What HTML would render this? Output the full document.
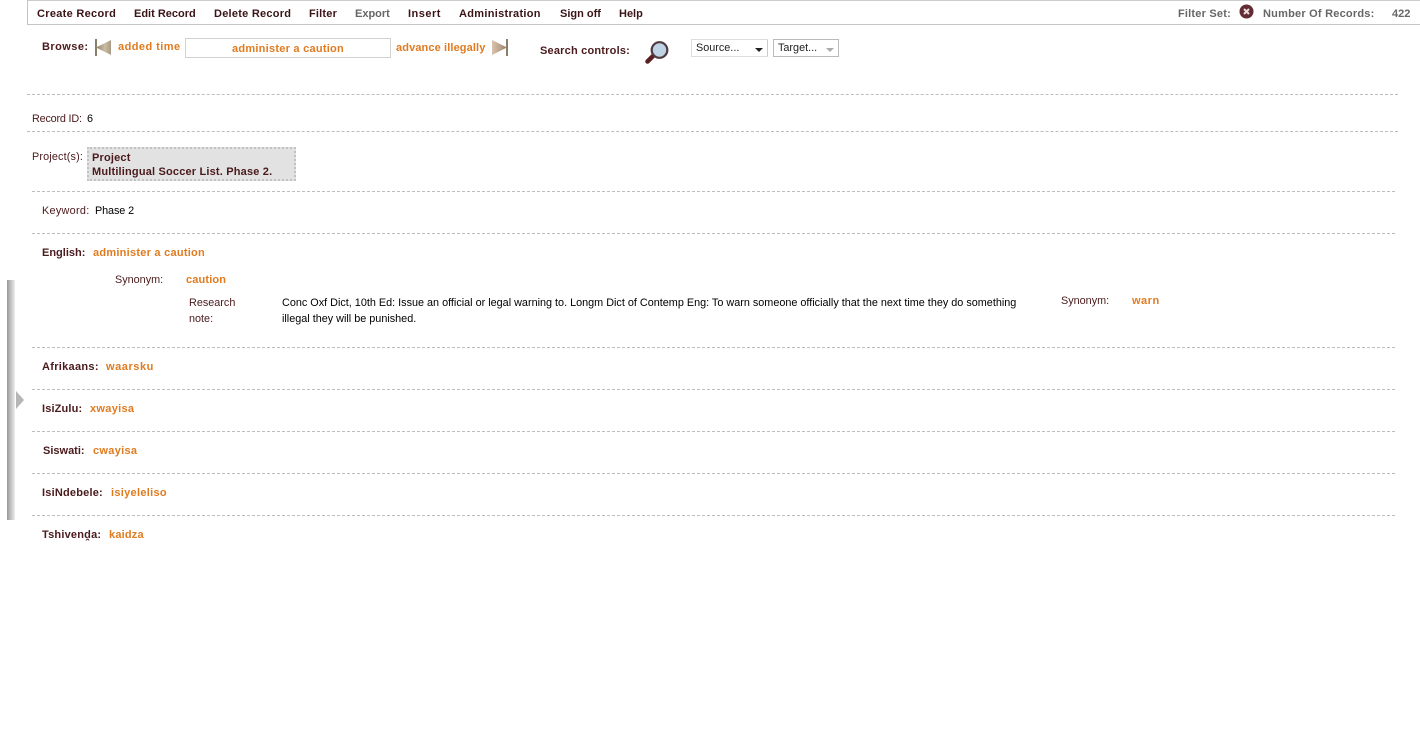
<!DOCTYPE html>
<html><head><meta charset="utf-8"><style>
html,body{margin:0;padding:0;background:#fff;width:1420px;height:752px;overflow:hidden}
body{position:relative;font-family:"Liberation Sans",Arial,sans-serif;font-size:10.83px;color:#4a1a1c}
.t{position:absolute;white-space:nowrap;line-height:14px}
.b{font-weight:bold;font-size:11px;letter-spacing:.2px}
.o{color:#e07b20;font-weight:bold;font-size:11px;letter-spacing:.2px}
.k{color:#000}
.m{color:#3a1416;font-weight:bold;font-size:11px;top:7px;letter-spacing:.1px}
.g{color:#666;font-weight:bold;font-size:11px;top:7px;letter-spacing:.1px}
.d{position:absolute;height:0;border-top:1px dashed #bdbdbd}
</style></head><body>
<div style="position:absolute;left:27px;top:0;width:1393px;height:23px;border:1px solid #c4c4c4;border-right:0;border-top-color:#ccc"></div>
<span class="t m" style="left:37px;letter-spacing:.3px">Create Record</span>
<span class="t m" style="left:134px;letter-spacing:0">Edit Record</span>
<span class="t m" style="left:214px;letter-spacing:.25px">Delete Record</span>
<span class="t m" style="left:309px;letter-spacing:.2px">Filter</span>
<span class="t g" style="left:355px;letter-spacing:0">Export</span>
<span class="t m" style="left:408px;letter-spacing:.5px">Insert</span>
<span class="t m" style="left:459px;letter-spacing:.3px">Administration</span>
<span class="t m" style="left:560px;letter-spacing:0">Sign off</span>
<span class="t m" style="left:619px;letter-spacing:0">Help</span>
<span class="t g" style="left:1178px;letter-spacing:.2px">Filter Set:</span>
<svg style="position:absolute;left:1239px;top:4px" width="15" height="15"><circle cx="7.5" cy="7.5" r="7" fill="#632c33"/><path d="M5 5l5 5M10 5l-5 5" stroke="#e8dcdc" stroke-width="2"/></svg>
<span class="t g" style="left:1263px;letter-spacing:.22px">Number Of Records:</span>
<span class="t g" style="left:1392px;letter-spacing:0">422</span>

<span class="t b" style="left:42px;top:40px;letter-spacing:.45px">Browse:</span>
<svg style="position:absolute;left:94px;top:38px" width="18" height="19"><defs><linearGradient id="a" x1="0" x2="1" y1="0" y2="0"><stop offset="0" stop-color="#8f8267"/><stop offset=".6" stop-color="#c9bda6"/><stop offset="1" stop-color="#a89a80"/></linearGradient><linearGradient id="c" x1="0" x2="1" y1="0" y2="0"><stop offset="0" stop-color="#d9c2ae"/><stop offset=".6" stop-color="#b89f88"/><stop offset="1" stop-color="#8f7c62"/></linearGradient></defs><rect x="1" y="1" width="2" height="17" fill="#8a8068"/><path d="M17 2V17L2 9.5Z" fill="url(#a)"/></svg>
<span class="t o" style="left:118px;top:40px;letter-spacing:.45px">added time</span>
<div style="position:absolute;left:185px;top:38px;width:204px;height:18px;border:1px solid #d2d2d2"></div>
<span class="t o" style="left:232px;top:42px;letter-spacing:.25px">administer a caution</span>
<span class="t o" style="left:396px;top:41px;letter-spacing:.12px">advance illegally</span>
<svg style="position:absolute;left:491px;top:38px" width="18" height="19"><path d="M1 2V17L16 9.5Z" fill="url(#c)"/><rect x="15" y="1" width="2" height="17" fill="#8a8068"/></svg>
<span class="t b" style="left:540px;top:44px;letter-spacing:.2px">Search controls:</span>
<svg style="position:absolute;left:644px;top:40px" width="26" height="26"><path d="M3.5 21.5L10 15" stroke="#5a1f22" stroke-width="4.5" stroke-linecap="round"/><circle cx="15.5" cy="10" r="7.8" fill="#c0d2e6" stroke="#4f3a40" stroke-width="2.2"/></svg>
<div style="position:absolute;left:691px;top:39px;width:75px;height:16px;border:1px solid #ddd;border-right-color:#ccc"></div>
<span class="t" style="left:696px;top:41px;color:#222">Source...</span>
<svg style="position:absolute;left:755px;top:48px" width="9" height="5"><path d="M0 0H8L4 4Z" fill="#222"/></svg>
<div style="position:absolute;left:773px;top:39px;width:64px;height:16px;border:1px solid #bbb"></div>
<span class="t" style="left:778px;top:41px;color:#222">Target...</span>
<svg style="position:absolute;left:826px;top:48px" width="9" height="5"><path d="M0 0H8L4 4Z" fill="#aaa"/></svg>

<div class="d" style="left:27px;top:94px;width:1371px"></div>
<span class="t" style="left:32px;top:112px;letter-spacing:-.2px">Record ID:</span><span class="t k" style="left:87px;top:112px">6</span>
<div class="d" style="left:27px;top:131px;width:1371px"></div>
<span class="t" style="left:32px;top:150px;letter-spacing:.15px">Project(s):</span>
<div style="position:absolute;left:87px;top:147px;width:205px;height:30px;background:#e2e2e2;border:2px dotted #c2c2c2"></div>
<span class="t b" style="left:92px;top:151px;letter-spacing:.18px">Project</span>
<span class="t b" style="left:92px;top:165px;letter-spacing:.18px">Multilingual Soccer List. Phase 2.</span>
<div class="d" style="left:32px;top:191px;width:1363px"></div>
<span class="t" style="left:42px;top:204px;letter-spacing:.3px">Keyword:</span><span class="t k" style="left:95px;top:204px;letter-spacing:-.1px">Phase 2</span>
<div class="d" style="left:32px;top:233px;width:1363px"></div>
<span class="t b" style="left:42px;top:246px;letter-spacing:0">English:</span><span class="t o" style="left:93px;top:246px;letter-spacing:.25px">administer a caution</span>
<span class="t" style="left:115px;top:273px">Synonym:</span><span class="t o" style="left:186px;top:273px;letter-spacing:.15px">caution</span>
<span class="t" style="left:189px;top:296px">Research</span><span class="t" style="left:189px;top:312px">note:</span>
<span class="t k" style="left:282px;top:296px">Conc Oxf Dict, 10th Ed: Issue an official or legal warning to. Longm Dict of Contemp Eng: To warn someone officially that the next time they do something</span>
<span class="t k" style="left:282px;top:312px">illegal they will be punished.</span>
<span class="t" style="left:1061px;top:294px">Synonym:</span><span class="t o" style="left:1132px;top:294px;letter-spacing:.5px">warn</span>
<div class="d" style="left:32px;top:347px;width:1363px"></div>
<span class="t b" style="left:42px;top:360px;letter-spacing:.3px">Afrikaans:</span><span class="t o" style="left:106px;top:360px;letter-spacing:.55px">waarsku</span>
<div class="d" style="left:32px;top:389px;width:1363px"></div>
<span class="t b" style="left:42px;top:402px;letter-spacing:.15px">IsiZulu:</span><span class="t o" style="left:90px;top:402px;letter-spacing:.3px">xwayisa</span>
<div class="d" style="left:32px;top:431px;width:1363px"></div>
<span class="t b" style="left:43px;top:444px;letter-spacing:0">Siswati:</span><span class="t o" style="left:93px;top:444px;letter-spacing:.3px">cwayisa</span>
<div class="d" style="left:32px;top:473px;width:1363px"></div>
<span class="t b" style="left:42px;top:486px;letter-spacing:.2px">IsiNdebele:</span><span class="t o" style="left:111px;top:486px;letter-spacing:.3px">isiyeleliso</span>
<div class="d" style="left:32px;top:515px;width:1363px"></div>
<span class="t b" style="left:42px;top:528px;letter-spacing:.2px">Tshivenḓa:</span><span class="t o" style="left:109px;top:528px;letter-spacing:.2px">kaidza</span>

<div style="position:absolute;left:7px;top:280px;width:8px;height:240px;background:linear-gradient(to right,#999,#bbb 40%,#eee)"></div>
<svg style="position:absolute;left:16px;top:391px" width="9" height="18"><path d="M0 0L8 9L0 18Z" fill="#b5b5b5"/></svg>
</body></html>
